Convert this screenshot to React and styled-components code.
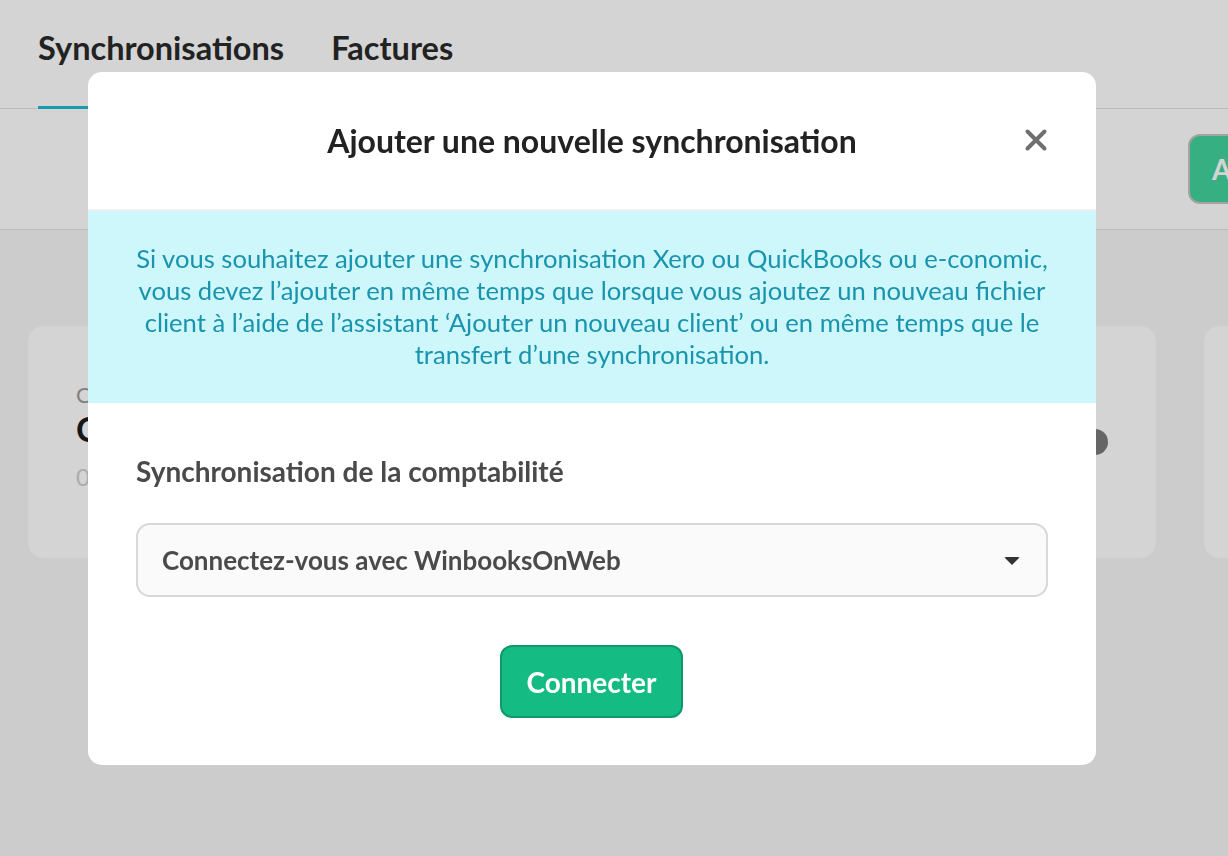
import React from "react";
import styled, { createGlobalStyle } from "styled-components";

const GlobalStyle = createGlobalStyle`
  html, body {
    margin: 0;
    padding: 0;
    background: #f6f6f6;
    font-family: Lato, "Liberation Sans", sans-serif;
  }
  * { box-sizing: border-box; }
`;

const Page = styled.div`
  width: 1228px;
  height: 856px;
  overflow: hidden;
  background: #f6f6f6;
`;

const TabBar = styled.div`
  height: 109px;
  background: #ffffff;
  border-bottom: 1px solid #e2e2e2;
  display: flex;
  align-items: flex-end;
  gap: 47px;
  padding-left: 38px;
`;

const Tab = styled.div`
  font-size: 32.5px;
  font-weight: 700;
  color: #2a2a2a;
  padding-bottom: 39px;
  border-bottom: 3px solid ${(p) => (p.active ? "#1fbcd4" : "transparent")};
  margin-bottom: -1px;
`;

const ActionBar = styled.div`
  height: 121px;
  background: #ffffff;
  border-bottom: 1px solid #e2e2e2;
  display: flex;
  align-items: center;
  justify-content: flex-end;
  margin-right: -60px;
`;

const AddButton = styled.div`
  width: 100px;
  height: 70px;
  border-radius: 12px;
  background: #42d39e;
  border: 2px solid #c4c4c4;
  color: #fff;
  font-size: 28px;
  font-weight: 700;
  display: flex;
  align-items: center;
  padding-left: 22px;
`;

const Cards = styled.div`
  display: flex;
  gap: 48px;
  padding: 96px 0 0 28px;
`;

const Card = styled.div`
  flex: 0 0 1128px;
  height: 232px;
  background: #ffffff;
  border-radius: 16px;
  padding: 56px 48px;
  display: flex;
  flex-direction: column;
  position: relative;
`;

const CardLabel = styled.div`
  font-size: 22px;
  color: #9a9a9a;
  line-height: 26px;
`;

const CardTitle = styled.div`
  font-size: 34px;
  font-weight: 700;
  color: #1c1c1c;
  line-height: 42px;
`;

const CardSub = styled.div`
  font-size: 24px;
  color: #cfcfcf;
  margin-top: 12px;
`;

const InfoDot = styled.div`
  position: absolute;
  right: 48px;
  top: 103px;
  width: 26px;
  height: 26px;
  border-radius: 50%;
  background: #7b7b7b;
`;

const Overlay = styled.div`
  position: fixed;
  inset: 0;
  background: rgba(0, 0, 0, 0.17);
  padding: 72px 0 0 88px;
`;

const Modal = styled.div`
  width: 1008px;
  height: 693px;
  background: #ffffff;
  border-radius: 14px;
  overflow: hidden;
  display: flex;
  flex-direction: column;
`;

const ModalHeader = styled.div`
  height: 139px;
  border-bottom: 2px solid #f0f0f0;
  display: flex;
  align-items: center;
  justify-content: center;
  position: relative;
`;

const ModalTitle = styled.h2`
  margin: 0;
  font-size: 32px;
  font-weight: 700;
  color: #222222;
`;

const Close = styled.button`
  position: absolute;
  right: 48px;
  top: 56px;
  width: 24px;
  height: 24px;
  padding: 0;
  border: 0;
  background: none;
  cursor: pointer;
`;

const Notice = styled.div`
  background: #cdf7fb;
  height: 192px;
  display: flex;
  align-items: center;
  justify-content: center;
  text-align: center;
  padding: 0 20px 2px;
  color: #1a93ad;
  font-size: 25.6px;
  line-height: 32px;
  white-space: nowrap;
`;

const Body = styled.div`
  padding: 48px 48px 0;
  display: flex;
  flex-direction: column;
`;

const Label = styled.div`
  font-size: 28px;
  font-weight: 700;
  color: #4a4a4a;
  line-height: 40px;
`;

const Select = styled.div`
  margin-top: 32px;
  height: 74px;
  border: 2px solid #d8d8d8;
  border-radius: 14px;
  background: #fafafa;
  display: flex;
  align-items: center;
  justify-content: space-between;
  padding: 0 26px 0 24px;
  font-size: 26px;
  font-weight: 700;
  color: #4a4a4a;
`;

const Caret = styled.span`
  width: 0;
  height: 0;
  border-left: 8px solid transparent;
  border-right: 8px solid transparent;
  border-top: 8px solid #333;
  border-radius: 2px;
  margin-top: 2px;
`;

const Actions = styled.div`
  display: flex;
  justify-content: center;
  margin-top: 48px;
`;

const ConnectButton = styled.button`
  width: 183px;
  height: 73px;
  border-radius: 12px;
  background: #14bb82;
  border: 2px solid #0d9a68;
  color: #ffffff;
  font-family: Lato, "Liberation Sans", sans-serif;
  font-size: 28px;
  font-weight: 700;
  cursor: pointer;
  margin-right: 1px;
`;

const CloseIcon = () => (
  <svg width="24" height="24" viewBox="0 0 24 24">
    <path
      d="M3.5 3.5 L20.5 20.5 M20.5 3.5 L3.5 20.5"
      stroke="#6f6f6f"
      strokeWidth="4"
      strokeLinecap="round"
    />
  </svg>
);

export default function App() {
  return (
    <>
      <GlobalStyle />
      <Page>
        <TabBar>
          <Tab active>Synchronisations</Tab>
          <Tab>Factures</Tab>
        </TabBar>
        <ActionBar>
          <AddButton>A</AddButton>
        </ActionBar>
        <Cards>
          <Card>
            <CardLabel>Comptabilité</CardLabel>
            <CardTitle>Connecté</CardTitle>
            <CardSub>0 erreur</CardSub>
            <InfoDot />
          </Card>
          <Card />
        </Cards>
      </Page>
      <Overlay>
        <Modal>
          <ModalHeader>
            <ModalTitle>Ajouter une nouvelle synchronisation</ModalTitle>
            <Close aria-label="Fermer">
              <CloseIcon />
            </Close>
          </ModalHeader>
          <Notice>
            Si vous souhaitez ajouter une synchronisation Xero ou QuickBooks ou e-conomic,
            <br />
            vous devez l’ajouter en même temps que lorsque vous ajoutez un nouveau fichier
            <br />
            client à l’aide de l’assistant ‘Ajouter un nouveau client’ ou en même temps que le
            <br />
            transfert d’une synchronisation.
          </Notice>
          <Body>
            <Label>Synchronisation de la comptabilité</Label>
            <Select>
              Connectez-vous avec WinbooksOnWeb
              <Caret />
            </Select>
            <Actions>
              <ConnectButton>Connecter</ConnectButton>
            </Actions>
          </Body>
        </Modal>
      </Overlay>
    </>
  );
}
